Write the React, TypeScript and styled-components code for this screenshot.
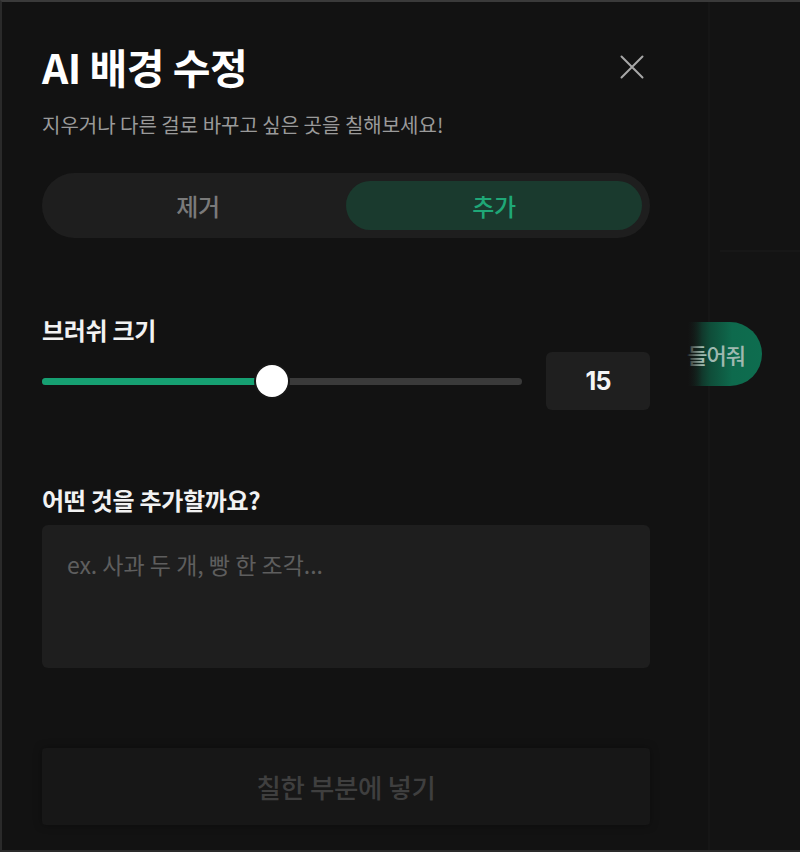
import React, { useState } from "react";
import styled, { createGlobalStyle } from "styled-components";

const GlobalStyle = createGlobalStyle`
  html, body {
    margin: 0;
    padding: 0;
    background: #111111;
  }
  * {
    box-sizing: border-box;
  }
  body {
    font-family: "Noto Sans CJK KR", "Noto Sans", sans-serif;
  }
`;

const Screen = styled.div`
  display: flex;
  width: 800px;
  height: 852px;
  border-top: 2px solid #3a3a3a;
  border-left: 2px solid #2a2a2a;
  border-bottom: 2px solid #2a2a2a;
  background: #121212;
  overflow: hidden;
`;

const Panel = styled.div`
  width: 686px;
  flex-shrink: 0;
  display: flex;
  flex-direction: column;
  padding: 36px 38px 0 40px;
  background: #121212;
`;

const Header = styled.div`
  display: flex;
  justify-content: space-between;
  align-items: flex-start;
`;

const Title = styled.h1`
  margin: 0;
  font-size: 41px;
  font-weight: 700;
  letter-spacing: -0.5px;
  line-height: 56px;
  color: #ffffff;
`;

const CloseButton = styled.button`
  width: 36px;
  height: 36px;
  margin: 11px 0 0 0;
  padding: 0;
  border: none;
  background: transparent;
  display: flex;
  align-items: center;
  justify-content: center;
  cursor: pointer;
`;

const Subtitle = styled.p`
  margin: 17px 0 0 0;
  font-size: 20px;
  letter-spacing: 0;
  line-height: 28px;
  color: #9a9a9a;
`;

const Toggle = styled.div`
  margin-top: 34px;
  width: 608px;
  height: 65px;
  padding: 8px;
  border-radius: 33px;
  background: #1e1e1e;
  display: flex;
`;

const Segment = styled.button<{ $active: boolean }>`
  flex: 1;
  border: none;
  border-radius: 25px;
  font-family: inherit;
  font-size: 24px;
  font-weight: 500;
  letter-spacing: -0.3px;
  background: ${(p) => (p.$active ? "#1a3a2e" : "transparent")};
  color: ${(p) => (p.$active ? "#1fa777" : "#7a7a7a")};
  cursor: pointer;
`;

const Label = styled.div<{ $top: number }>`
  margin-top: ${(p) => p.$top}px;
  font-size: 24px;
  font-weight: 700;
  letter-spacing: -0.3px;
  line-height: 32px;
  color: #f2f2f2;
`;

const SliderRow = styled.div`
  margin-top: 6px;
  width: 608px;
  display: flex;
  align-items: center;
  gap: 24px;
`;

const Track = styled.div`
  flex: 1;
  height: 7px;
  border-radius: 4px;
  background: #3a3a3a;
  position: relative;
`;

const Fill = styled.div`
  height: 100%;
  border-radius: 4px;
  background: #16a072;
`;

const Thumb = styled.div`
  position: absolute;
  top: 50%;
  width: 32px;
  height: 32px;
  margin: -16px 0 0 -16px;
  border-radius: 50%;
  background: #ffffff;
  box-shadow: 0 0 0 2px #161616;
`;

const ValueBox = styled.div`
  width: 104px;
  height: 58px;
  border-radius: 6px;
  background: #1f1f1f;
  display: flex;
  align-items: center;
  justify-content: center;
  font-family: "Inter", "Noto Sans", sans-serif;
  font-size: 25px;
  font-weight: 700;
  letter-spacing: -0.8px;
  color: #f5f5f5;
`;

const PromptArea = styled.textarea`
  margin-top: 9px;
  width: 608px;
  height: 143px;
  padding: 24px 25px;
  border: none;
  border-radius: 6px;
  outline: none;
  resize: none;
  background: #1e1e1e;
  color: #e0e0e0;
  font-family: inherit;
  font-size: 23px;
  letter-spacing: 0;
  line-height: 30px;
  &::placeholder {
    color: #5e5e5e;
  }
`;

const SubmitButton = styled.button`
  margin-top: 80px;
  width: 608px;
  height: 77px;
  border: none;
  border-radius: 4px;
  background: #171717;
  box-shadow: 0 0 8px rgba(0, 0, 0, 0.35);
  color: #3f3f3f;
  font-family: inherit;
  font-size: 26.5px;
  font-weight: 500;
  letter-spacing: -0.4px;
  cursor: not-allowed;
`;

const Backdrop = styled.div`
  flex: 1;
  display: flex;
  flex-direction: column;
  background: linear-gradient(
    90deg,
    #121212 0,
    #121212 20px,
    #161616 20px,
    #161616 22px,
    #131313 22px
  );
`;

const Divider = styled.div`
  margin-top: 248px;
  margin-left: 32px;
  height: 2px;
  background: #171717;
`;

const Pill = styled.div`
  position: relative;
  margin-top: 70px;
  width: 74px;
  height: 64px;
  border-radius: 0 32px 32px 0;
  background: linear-gradient(90deg, #141414 0%, #0f4d39 30%, #0e6a4d 60%, #0e6d4f 100%);
  display: flex;
  align-items: center;
  justify-content: flex-end;
  padding-right: 17px;

  &::after {
    content: "";
    position: absolute;
    left: 0;
    top: 0;
    bottom: 0;
    width: 14px;
    background: linear-gradient(90deg, rgba(18, 18, 18, 0.8), rgba(18, 18, 18, 0));
  }
`;

const PillText = styled.span`
  white-space: nowrap;
  font-size: 22px;
  font-weight: 500;
  letter-spacing: -1px;
  color: #9fb9b0;
`;

export default function App() {
  const [mode, setMode] = useState<"remove" | "add">("add");
  const [size] = useState(15);
  const percent = 48;

  return (
    <>
      <GlobalStyle />
      <Screen>
        <Panel>
          <Header>
            <Title>AI 배경 수정</Title>
            <CloseButton aria-label="닫기">
              <svg width="24" height="24" viewBox="0 0 24 24" fill="none">
                <path d="M1.5 1.5L22.5 22.5M22.5 1.5L1.5 22.5" stroke="#a8a8a8" strokeWidth="2" strokeLinecap="round" />
              </svg>
            </CloseButton>
          </Header>
          <Subtitle>지우거나 다른 걸로 바꾸고 싶은 곳을 칠해보세요!</Subtitle>

          <Toggle>
            <Segment $active={mode === "remove"} onClick={() => setMode("remove")}>제거</Segment>
            <Segment $active={mode === "add"} onClick={() => setMode("add")}>추가</Segment>
          </Toggle>

          <Label $top={76}>브러쉬 크기</Label>
          <SliderRow>
            <Track>
              <Fill style={{ width: `${percent}%` }} />
              <Thumb style={{ left: `${percent}%` }} />
            </Track>
            <ValueBox>{size}</ValueBox>
          </SliderRow>

          <Label $top={74}>어떤 것을 추가할까요?</Label>
          <PromptArea placeholder="ex. 사과 두 개, 빵 한 조각..." />

          <SubmitButton disabled>칠한 부분에 넣기</SubmitButton>
        </Panel>
        <Backdrop>
          <Divider />
          <Pill>
            <PillText>들어줘</PillText>
          </Pill>
        </Backdrop>
      </Screen>
    </>
  );
}
